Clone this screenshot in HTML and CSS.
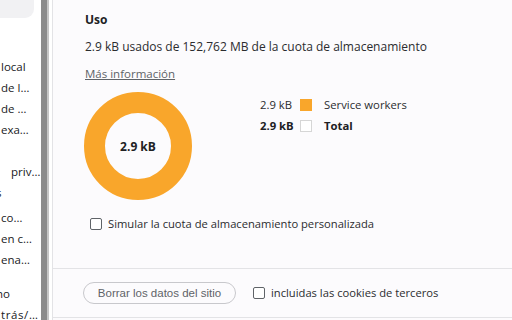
FILE: index.html
```html
<!DOCTYPE html>
<html lang="es">
<head>
  <meta charset="UTF-8" />
  <title>Almacenamiento</title>
  <link rel="stylesheet" href="styles.css">
</head>
<body>
  <div class="layout">
    <!-- Sidebar (scrolled to the right, labels clipped) -->
    <nav class="sidebar">
      <div class="filter"></div>
      <ul class="tree">
        <li class="item">local</li>
        <li class="item">de l…</li>
        <li class="item">de …</li>
        <li class="item">exa…</li>
        <li class="item"></li>
        <li class="item indent">priv…</li>
        <li class="item cut">s</li>
        <li class="item gap">co…</li>
        <li class="item">en c…</li>
        <li class="item">ena…</li>
        <li class="item spacer"></li>
        <li class="item cut">no</li>
        <li class="item wide">trás/…</li>
      </ul>
    </nav>
    <div class="splitter"></div>

    <!-- Main panel -->
    <main class="panel">
      <section class="usage">
        <h2 class="title">Uso</h2>
        <p class="summary">2.9 kB usados de 152,762 MB de la cuota de almacenamiento</p>
        <a class="more" href="#">Más información</a>

        <div class="chart-row">
          <div class="donut">
            <svg width="108" height="108" viewBox="0 0 108 108">
              <circle cx="54" cy="54" r="43.5" fill="none" stroke="#f9a62b" stroke-width="21" />
            </svg>
            <span class="donut-label">2.9 kB</span>
          </div>
          <div class="legend">
            <span class="size">2.9 kB</span>
            <span class="swatch filled"></span>
            <span class="name">Service workers</span>
            <span class="size bold">2.9 kB</span>
            <span class="swatch"></span>
            <span class="name bold">Total</span>
          </div>
        </div>

        <label class="check simulate">
          <span class="box"></span>
          Simular la cuota de almacenamiento personalizada
        </label>
      </section>

      <footer class="actions">
        <button class="clear-btn">Borrar los datos del sitio</button>
        <label class="check">
          <span class="box"></span>
          incluidas las cookies de terceros
        </label>
      </footer>
    </main>
  </div>
</body>
</html>
```

FILE: styles.css
```css
/* GLOBAL */
:root {
  --text: #2b2c2f;
  --muted: #5f6368;
  --line: #e3e3e6;
  --orange: #f9a62b;
  --font: 'Open Sans', 'Noto Sans', sans-serif;
}

html, body {
  margin: 0;
  padding: 0;
  height: 320px;
  overflow: hidden;
  background: #ffffff;
  font-family: var(--font);
  color: var(--text);
}

.layout {
  display: flex;
  height: 320px;
}

/* SIDEBAR */
.sidebar {
  width: 41px;
  flex: 0 0 41px;
  overflow: hidden;
  background: #ffffff;
}
.filter {
  width: 34px;
  height: 18px;
  background: #f1f1f3;
  border-bottom-right-radius: 9px;
}
.tree {
  list-style: none;
  margin: 38px 0 0;
  padding: 0;
}
.item {
  height: 21px;
  line-height: 21px;
  font-size: 11.5px;
  white-space: nowrap;
  overflow: hidden;
  padding-left: 1px;
  color: #202124;
}
.item.indent {
  padding-left: 11px;
}
.item.cut {
  text-indent: -5px;
}
.item.wide {
  letter-spacing: 0.6px;
}
.item.gap {
  margin-top: 4px;
}
.item.spacer {
  height: 13px;
}

.splitter {
  flex: 0 0 6px;
  background: #8b8b8b;
  border-right: 2px solid #c6c6c6;
  margin-right: 3px;
}

/* MAIN PANEL */
.panel {
  flex: 1;
  display: flex;
  flex-direction: column;
  border-left: 1px solid var(--line);
  background: #fcfbfd;
}

.usage {
  padding: 11px 0 0 32px;
  height: 269px;
  box-sizing: border-box;
  border-bottom: 1px solid var(--line);
}
.title {
  margin: 0;
  font-size: 12px;
  font-weight: 700;
  line-height: 18px;
  color: #202124;
}
.summary {
  margin: 10px 0 0;
  font-size: 12px;
  line-height: 16px;
}
.more {
  display: inline-block;
  margin-top: 11px;
  font-size: 11.5px;
  line-height: 16px;
  color: var(--muted);
  text-decoration: underline;
}

.chart-row {
  display: flex;
  align-items: flex-start;
  gap: 68px;
  margin-top: 9px;
  margin-left: -1px;
}
.donut {
  width: 108px;
  height: 108px;
  display: flex;
  align-items: center;
  justify-content: center;
}
.donut svg {
  display: block;
}
.donut-label {
  position: absolute;
  font-size: 12px;
  font-weight: 700;
  color: #202124;
}
.legend {
  display: grid;
  grid-template-columns: 30px 12px auto;
  column-gap: 10px;
  row-gap: 9px;
  align-items: center;
  margin-top: 7px;
  font-size: 11.3px;
  line-height: 12px;
}
.legend .size {
  text-align: right;
  white-space: nowrap;
}
.legend .name {
  margin-left: 2px;
}
.legend .bold {
  font-weight: 700;
  color: #202124;
}
.swatch {
  width: 12px;
  height: 12px;
  box-sizing: border-box;
  border: 1px solid #d6d6d6;
  background: #ffffff;
}
.swatch.filled {
  background: var(--orange);
  border-color: var(--orange);
}

.check {
  display: flex;
  align-items: center;
  gap: 6px;
  font-size: 11.2px;
  line-height: 16px;
}
.simulate {
  margin-top: 16px;
  margin-left: 5px;
}
.box {
  width: 12px;
  height: 12px;
  box-sizing: border-box;
  border: 1px solid #5f6368;
  border-radius: 2px;
  background: #ffffff;
}

/* FOOTER ACTIONS */
.actions {
  display: flex;
  align-items: center;
  gap: 17px;
  height: 49px;
  box-sizing: border-box;
  padding: 0 0 0 30px;
  border-bottom: 1px solid var(--line);
}
.clear-btn {
  height: 22px;
  width: 153px;
  padding: 0;
  border: 1px solid #c8c8cc;
  border-radius: 11px;
  background: #fcfbfd;
  font-family: 'Liberation Sans', Arial, sans-serif;
  font-size: 11.5px;
  color: #5f6368;
}
```
